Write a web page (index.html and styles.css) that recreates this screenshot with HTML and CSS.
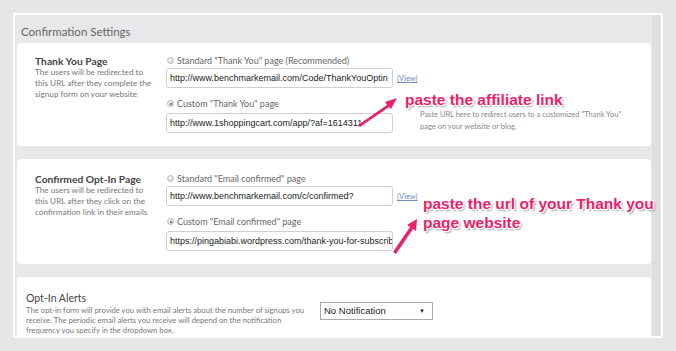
FILE: index.html
```html
<!DOCTYPE html>
<html lang="en">
<head>
    <meta charset="UTF-8">
    <title>Confirmation Settings</title>
    <link rel="stylesheet" href="styles.css">
</head>
<body>
    <div class="frame">
        <div class="panel">
            <h2 class="panel-title">Confirmation Settings</h2>

            <!-- Thank You Page -->
            <div class="card">
                <div class="card-info">
                    <h3>Thank You Page</h3>
                    <p>The users will be redirected to this URL after they complete the signup form on your website</p>
                </div>
                <div class="card-fields">
                    <label class="radio"><span class="dot"></span>Standard "Thank You" page (Recommended)</label>
                    <div class="field-row">
                        <div class="url-box">http://www.benchmarkemail.com/Code/ThankYouOptin</div>
                        <a class="view-link" href="#">(View)</a>
                    </div>
                    <label class="radio second"><span class="dot checked"></span>Custom "Thank You" page</label>
                    <div class="field-row">
                        <div class="url-box">http://www.1shoppingcart.com/app/?af=1614311</div>
                        <p class="hint">Paste URL here to redirect users to a customized "Thank You" page on your website or blog.</p>
                    </div>
                </div>
                <div class="note note-one">paste the affiliate link</div>
                <svg class="arrow arrow-one" width="44" height="34" viewBox="0 0 44 34">
                    <polygon points="1,30 30,10 28,7 40,3 34,14 32,12 3,32" fill="#e8236b"/>
                </svg>
            </div>

            <!-- Confirmed Opt-In Page -->
            <div class="card second-card">
                <div class="card-info">
                    <h3>Confirmed Opt-In Page</h3>
                    <p>The users will be redirected to this URL after they click on the confirmation link in their emails</p>
                </div>
                <div class="card-fields">
                    <label class="radio"><span class="dot"></span>Standard "Email confirmed" page</label>
                    <div class="field-row">
                        <div class="url-box">http://www.benchmarkemail.com/c/confirmed?</div>
                        <a class="view-link" href="#">(View)</a>
                    </div>
                    <label class="radio second"><span class="dot checked"></span>Custom "Email confirmed" page</label>
                    <div class="field-row">
                        <div class="url-box">https://pingabiabi.wordpress.com/thank-you-for-subscribing</div>
                    </div>
                </div>
                <div class="note note-two">paste the url of your Thank you<br>page website</div>
                <svg class="arrow arrow-two" width="30" height="38" viewBox="0 0 30 38">
                    <polygon points="1,35 18,10 15,8 25,2 24,14 21,12 4,37" fill="#e8236b"/>
                </svg>
            </div>

            <!-- Opt-In Alerts -->
            <div class="card alerts-card">
                <div class="alerts-info">
                    <h3>Opt-In Alerts</h3>
                    <p>The opt-in form will provide you with email alerts about the number of signups you receive. The periodic email alerts you receive will depend on the notification frequency you specify in the dropdown box.</p>
                </div>
                <div class="select-box">No Notification<span class="caret">&#9660;</span></div>
            </div>
        </div>
        <div class="track"></div>
    </div>
</body>
</html>
```

FILE: styles.css
```css
* {
    margin: 0;
    padding: 0;
    box-sizing: border-box;
}
body {
    background-color: #e6e6e6;
    font-family: Lato, "Open Sans", sans-serif;
    color: #555;
    padding: 13px;
}
.frame {
    width: 650px;
    height: 325px;
    border: 2px solid #fff;
    background-color: #e8e8ea;
    display: flex;
    overflow: hidden;
}
.panel {
    width: 636px;
    padding-left: 2px;
}
.track {
    width: 8px;
    margin-left: 1px;
    background-color: #dfdfe1;
}
.panel-title {
    height: 28px;
    padding: 10px 0 0 4px;
    font-size: 11.5px;
    font-weight: normal;
    color: #666;
}
.card {
    position: relative;
    display: flex;
    background-color: #fff;
    border-radius: 4px;
    padding: 12px 18px 13px 18px;
    margin-bottom: 13px;
}
.second-card {
    padding-top: 14px;
    padding-bottom: 13px;
}
.card-info {
    width: 131px;
    flex-shrink: 0;
}
.card-info h3,
.alerts-info h3 {
    font-size: 10.3px;
    font-weight: bold;
    color: #444;
    line-height: 12px;
}
.card-info p {
    width: 117px;
    font-size: 8.2px;
    line-height: 11px;
    color: #777;
}
.card-fields {
    display: flex;
    flex-direction: column;
}
.radio {
    display: flex;
    align-items: center;
    height: 11px;
    font-size: 9px;
    color: #666;
    margin-bottom: 2px;
}
.radio.second {
    margin-top: 10px;
    margin-bottom: 4px;
}
.dot {
    width: 7px;
    height: 7px;
    border-radius: 50%;
    background: radial-gradient(circle at 40% 35%, #fafafa, #c8c8c8);
    border: 1px solid #b8b8b8;
    margin: 0 3px 0 1px;
    position: relative;
}
.dot.checked::after {
    content: "";
    position: absolute;
    left: 1.5px;
    top: 1.5px;
    width: 2.5px;
    height: 2.5px;
    border-radius: 50%;
    background-color: #555;
}
.field-row {
    display: flex;
    align-items: flex-start;
}
.url-box {
    flex-shrink: 0;
    width: 227px;
    height: 20px;
    border: 1px solid #cfcfcf;
    border-radius: 3px;
    padding: 0 3px;
    font-family: "Liberation Sans", Arial, sans-serif;
    font-size: 9px;
    line-height: 18px;
    color: #222;
    white-space: nowrap;
    overflow: hidden;
}
.view-link {
    margin: 6px 0 0 4px;
    font-size: 7.5px;
    color: #6a8cc0;
}
.hint {
    width: 212px;
    height: 20px;
    margin: -4px 0 0 27px;
    font-size: 7.5px;
    line-height: 12px;
    color: #888;
}
.note {
    position: absolute;
    font-family: "Liberation Sans", Arial, sans-serif;
    font-weight: bold;
    font-size: 15.5px;
    line-height: 19px;
    color: #e8236b;
    text-shadow: -1px -1px 0 #fff, 1px -1px 0 #fff, -1px 1px 0 #fff, 1px 1px 0 #fff, 2px 2px 2px #999;
    white-space: nowrap;
}
.note-one {
    left: 388px;
    top: 47px;
}
.note-two {
    left: 406px;
    top: 35px;
}
.arrow {
    position: absolute;
}
.arrow-one {
    left: 340px;
    top: 52px;
}
.arrow-two {
    left: 375px;
    top: 58px;
}
.alerts-card {
    padding: 14px 9px 0 9px;
    height: 70px;
}
.alerts-info {
    width: 284px;
}
.alerts-info h3 {
    font-weight: normal;
    font-size: 10.5px;
    line-height: 14px;
    color: #444;
}
.alerts-info p {
    font-size: 7.7px;
    line-height: 10px;
    color: #777;
}
.select-box {
    position: relative;
    width: 113px;
    height: 18px;
    margin: 11px 0 0 10px;
    border: 1px solid #aaa;
    padding-left: 3px;
    font-family: "Liberation Sans", Arial, sans-serif;
    font-size: 9.5px;
    line-height: 16px;
    color: #222;
}
.caret {
    position: absolute;
    right: 7px;
    top: 0;
    font-size: 6px;
}
```
